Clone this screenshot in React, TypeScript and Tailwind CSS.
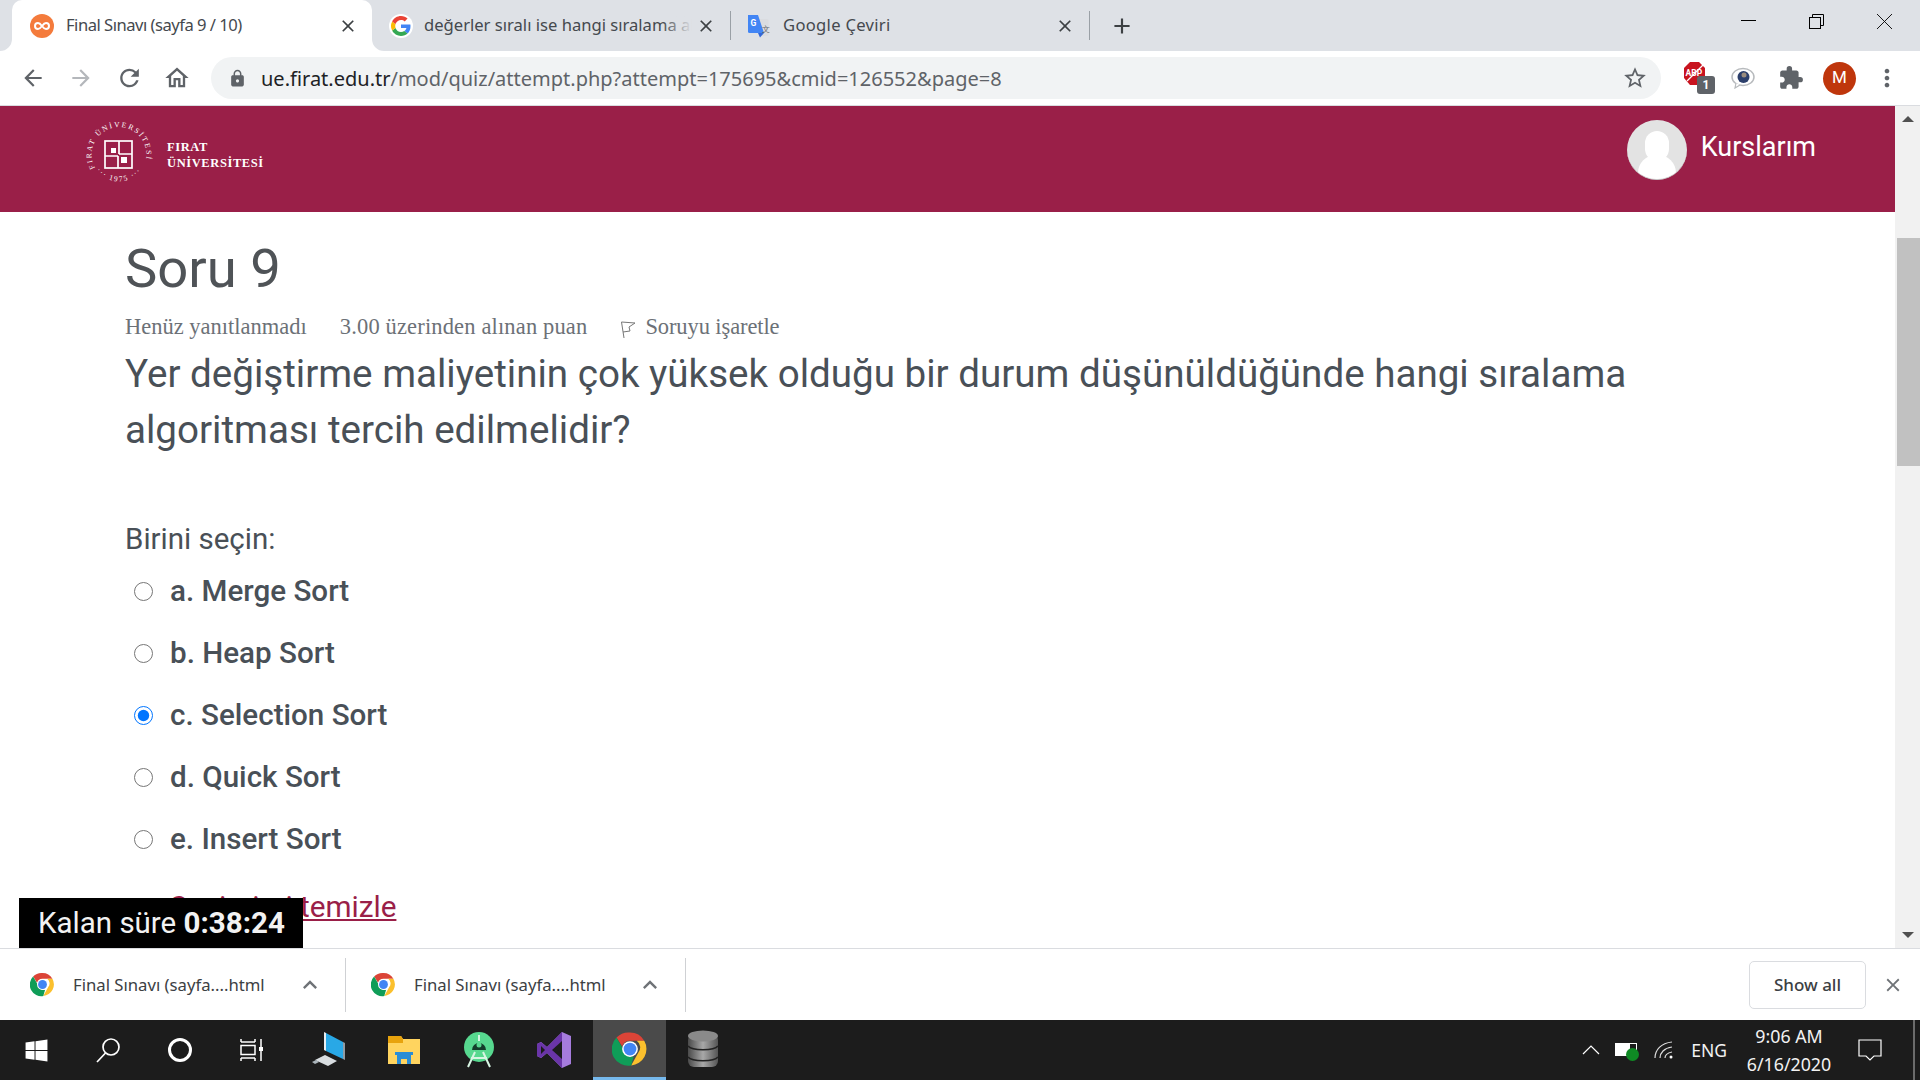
import {
  MdAdd,
  MdArrowBack,
  MdArrowForward,
  MdClose,
  MdExpandLess,
  MdExtension,
  MdLock,
  MdMoreVert,
  MdOutlineHome,
  MdRefresh,
  MdStarBorder,
} from "react-icons/md";
import { FaWindows } from "react-icons/fa";

function ChromeLogo({ size }: { size: number }) {
  return (
    <svg width={size} height={size} viewBox="0 0 48 48">
      <path d="M24 2a22 22 0 0 1 19 11H24a11 11 0 0 0-10.500 7.500L6 8.800A22 22 0 0 1 24 2z" fill="#db4437" />
      <path d="M43 13a22 22 0 0 1-17.500 32.900L35 29a11 11 0 0 0-2-16z" fill="#fbc02d" />
      <path d="M6 8.800l9.500 16.500A11 11 0 0 0 29 34l-3.500 12A22 22 0 0 1 6 8.800z" fill="#0f9d58" />
      <circle cx="24" cy="24" r="10.500" fill="#fff" />
      <circle cx="24" cy="24" r="8.500" fill="#4285f4" />
    </svg>
  );
}

function GoogleG() {
  return (
    <svg width="24" height="24" viewBox="0 0 48 48">
      <circle cx="24" cy="24" r="24" fill="#fff" />
      <path d="M43 24.500c0-1.400-.1-2.400-.3-3.500H24v7h10.800c-.5 2.700-2 4.700-4.300 6.200l6.500 5c3.800-3.500 6-8.700 6-14.700z" fill="#4285f4" />
      <path d="M24 44c5.400 0 9.900-1.800 13-4.800l-6.500-5c-1.700 1.200-3.900 1.900-6.500 1.900-5.100 0-9.400-3.400-11-8.100l-6.700 5.200C9.600 39.600 16.300 44 24 44z" fill="#34a853" />
      <path d="M13 28c-.8-2.500-.8-5.300 0-8l-6.700-5.200a20 20 0 0 0 0 18.400z" fill="#fbbc05" />
      <path d="M24 11.900c2.900 0 5.400 1 7.400 2.900l5.700-5.700C33.800 6 29.400 4 24 4 16.300 4 9.600 8.400 6.300 14.800L13 20c1.600-4.700 5.900-8.100 11-8.100z" fill="#ea4335" />
    </svg>
  );
}

function TranslateIcon() {
  return (
    <svg width="24" height="24" viewBox="0 0 24 24">
      <path d="M11 5h10a1.500 1.500 0 0 1 1.500 1.500v14a1.500 1.500 0 0 1-1.500 1.500h-8z" fill="#dadce0" />
      <path d="M2 1h10l6 18H3.500A1.500 1.500 0 0 1 2 17.500z" fill="#4285f4" />
      <path d="M12 19h6l-4 4.500z" fill="#3367d6" />
      <text x="4.500" y="12" fontSize="8.500" fontWeight="700" fill="#fff" fontFamily="Roboto, sans-serif">G</text>
      <text x="16" y="18" fontSize="8" fill="#5f6368" fontFamily="Roboto, sans-serif">文</text>
    </svg>
  );
}

function FiratLogo() {
  return (
    <svg width="70" height="70" viewBox="0 0 70 70" className="shrink-0">
      <defs>
        <path id="topArc" d="M11 48A27.500 27.500 0 1 1 59 48" />
        <path id="botArc" d="M12 50A29 29 0 0 0 58 50" />
      </defs>
      <text fontSize="7.500" fill="#fff" letterSpacing="1.800" fontFamily="'Liberation Serif', serif">
        <textPath href="#topArc">FIRAT ÜNİVERSİTESİ</textPath>
      </text>
      <text fontSize="7.500" fill="#fff" letterSpacing="1.500" fontFamily="'Liberation Serif', serif">
        <textPath href="#botArc" startOffset="50%" textAnchor="middle">··· 1975 ···</textPath>
      </text>
      <g fill="none" stroke="#fff" strokeWidth="1.700">
        <rect x="21" y="21" width="27" height="27" />
        <path d="M35 21v13M21 36h13M34 36v12M35 34h13" />
      </g>
      <rect x="27" y="28" width="5" height="5" fill="#fff" />
      <rect x="37" y="37" width="6" height="6" fill="#fff" />
    </svg>
  );
}

function Tab({ children, widthClass }: { children: React.ReactNode; widthClass: string }) {
  return <div className={`flex h-full items-center shrink-0 ${widthClass}`}>{children}</div>;
}

const tabText = "font-['Noto_Sans',sans-serif] text-[16.600px] text-[#45494e] whitespace-nowrap";

function TabBar() {
  return (
    <div className="h-[51px] bg-[#dee1e6] flex items-stretch shrink-0 pl-[12px]">
      <div className="relative w-[360px] shrink-0 bg-white rounded-t-[10px] flex items-center pl-[18px] pr-[14px]">
        <svg width="24" height="24" viewBox="0 0 24 24" className="shrink-0">
          <circle cx="12" cy="12" r="12" fill="#f47b3c" />
          <path d="M12 12c-1.500-2-2.500-3-4-3a3 3 0 0 0 0 6c1.500 0 2.500-1 4-3s2.500-3 4-3a3 3 0 0 1 0 6c-1.500 0-2.500-1-4-3z" fill="none" stroke="#fff" strokeWidth="2" />
        </svg>
        <span className={`${tabText} ml-[12px] flex-1 tracking-[-0.500px]`}>Final Sınavı (sayfa 9 / 10)</span>
        <MdClose size={20} className="text-[#3c4043]" />
        <svg width="12" height="12" viewBox="0 0 12 12" className="absolute left-[-12px] bottom-0">
          <path d="M12 0v12H0a12 12 0 0 0 12-12z" fill="#fff" />
        </svg>
        <svg width="12" height="12" viewBox="0 0 12 12" className="absolute right-[-12px] bottom-0">
          <path d="M0 0v12h12A12 12 0 0 1 0 0z" fill="#fff" />
        </svg>
      </div>
      <Tab widthClass="w-[358px] pl-[17px] pr-[14px]">
        <GoogleG />
        <div className="relative ml-[11px] flex-1 overflow-hidden">
          <span className={tabText}>değerler sıralı ise hangi sıralama algoritması</span>
          <div className="absolute right-0 top-0 bottom-0 w-[30px] bg-gradient-to-r from-transparent to-[#dee1e6]" />
        </div>
        <MdClose size={20} className="text-[#3c4043] ml-[4px]" />
      </Tab>
      <div className="w-px bg-[#9aa0a6] my-[11px]" />
      <Tab widthClass="w-[358px] pl-[15px] pr-[14px]">
        <TranslateIcon />
        <span className={`${tabText} ml-[13px] flex-1 tracking-[0.300px]`}>Google Çeviri</span>
        <MdClose size={20} className="text-[#3c4043]" />
      </Tab>
      <div className="w-px bg-[#9aa0a6] my-[11px]" />
      <div className="flex items-center pl-[19px]">
        <MdAdd size={26} className="text-[#3c4043]" />
      </div>
      <div className="ml-auto flex items-start text-[#202124] mr-[2px]">
        <div className="w-[68px] flex justify-center pt-[20px]">
          <div className="w-[15px] h-px bg-black" />
        </div>
        <div className="w-[68px] flex justify-center pt-[14px]">
          <svg width="15" height="15" viewBox="0 0 15 15" fill="none" stroke="#000">
            <rect x="0.500" y="3.500" width="11" height="11" fill="#dee1e6" />
            <path d="M3.500 3.500v-3h11v11h-3" />
          </svg>
        </div>
        <div className="w-[68px] flex justify-center pt-[13px]">
          <svg width="17" height="17" viewBox="0 0 17 17" stroke="#000" strokeWidth="0.900">
            <path d="M1 1l15 15M16 1L1 16" />
          </svg>
        </div>
      </div>
    </div>
  );
}

function Toolbar() {
  return (
    <div className="h-[55px] bg-white border-b border-[#dadce0] flex items-center shrink-0 pl-[20px]">
      <div className="flex items-center w-[191px] text-[#5f6368]">
        <MdArrowBack size={26} className="w-[48px] -ml-[11px]" />
        <MdArrowForward size={26} className="w-[48px] text-[#b4b7bb]" />
        <MdRefresh size={28} className="w-[49px]" />
        <MdOutlineHome size={28} className="w-[48px] -translate-x-[1px]" />
      </div>
      <div className="w-[1450px] h-[42px] rounded-full bg-[#f1f3f4] flex items-center pl-[17px] pr-[13px] shrink-0">
        <MdLock size={19} className="text-[#5f6368]" />
        <span className="ml-[14px] flex-1 font-['Noto_Sans',sans-serif] text-[20px] whitespace-nowrap text-[#5f6368] pt-[1px]">
          <span className="text-[#202124]">ue.firat.edu.tr</span>/mod/quiz/attempt.php?attempt=175695&amp;cmid=126552&amp;page=8
        </span>
        <MdStarBorder size={26} className="text-[#5f6368]" />
      </div>
      <div className="flex items-center ml-[22px]">
        <div className="relative w-[48px] h-[34px] flex items-start">
          <svg width="23" height="25" viewBox="0 0 23 25">
            <path d="M7 1h9l6 6v10l-6 7H7l-6-7V7z" fill="#c8131f" />
            <text x="2.500" y="15" fontSize="8.500" fontWeight="700" fill="#fff" fontFamily="Roboto, sans-serif">ABP</text>
            <path d="M4 20L20 4" stroke="#fff" strokeWidth="1.200" />
          </svg>
          <div className="absolute left-[14px] top-[15px] w-[18px] h-[18px] rounded-[3px] bg-[#5f6368] text-white text-[12px] font-bold flex items-center justify-center font-['Roboto',sans-serif]">
            1
          </div>
        </div>
        <div className="w-[50px]">
          <svg width="24" height="22" viewBox="0 0 24 22">
            <ellipse cx="12" cy="10" rx="11" ry="8.500" fill="#fff" stroke="#b7babd" strokeWidth="1.500" />
            <path d="M5 16l-1 5 5-3" fill="#fff" stroke="#b7babd" strokeWidth="1.200" />
            <circle cx="12.500" cy="10" r="6" fill="#2c3f6b" />
            <circle cx="13" cy="8" r="2.500" fill="#9a8c7d" />
          </svg>
        </div>
        <MdExtension size={26} className="text-[#5f6368] -ml-[3px] mr-[19px]" />
        <div className="w-[33px] h-[33px] rounded-full bg-[#bf360c] text-white text-[17px] flex items-center justify-center font-['Roboto',sans-serif]">
          M
        </div>
        <MdMoreVert size={28} className="text-[#5f6368] ml-[17px]" />
      </div>
    </div>
  );
}

const options = [
  { label: "a. Merge Sort" },
  { label: "b. Heap Sort" },
  { label: "c. Selection Sort", checked: true },
  { label: "d. Quick Sort" },
  { label: "e. Insert Sort" },
];

function Page() {
  return (
    <div className="flex-1 min-h-0 flex relative overflow-hidden">
      <div className="flex-1 min-w-0 overflow-hidden">
        <header className="h-[106px] bg-[#9a1f48] flex items-start justify-between pl-[84px] pr-[79px]">
          <div className="flex items-center mt-[14px]">
            <FiratLogo />
            <div className="ml-[13px] -mt-[1px] font-['Liberation_Serif',serif] font-bold text-white text-[12.500px] leading-[16px] tracking-[0.600px]">
              <div>FIRAT</div>
              <div>ÜNİVERSİTESİ</div>
            </div>
          </div>
          <div className="flex items-center mt-[14px]">
            <div className="w-[60px] h-[60px] rounded-full bg-[#e3e3e3] overflow-hidden relative border-b border-[#c9c9c9]">
              <div className="absolute left-[18px] top-[11px] w-[24px] h-[30px] rounded-full bg-white" />
              <div className="absolute left-[11px] top-[35px] w-[38px] h-[36px] rounded-full bg-white" />
            </div>
            <span className="ml-[14px] -mt-[6px] font-['Roboto',sans-serif] text-[27px] text-white">Kurslarım</span>
          </div>
        </header>
        <main className="pl-[125px] font-['Roboto',sans-serif] text-[#495057]">
          <h2 className="text-[54.400px] leading-[60px] mt-[27px] text-[#4f5357]">Soru 9</h2>
          <div className="flex items-center mt-[13px] font-['Liberation_Serif',serif] text-[22.500px] leading-[30px] text-[#6c7177]">
            <span>Henüz yanıtlanmadı</span>
            <span className="ml-[33px] tracking-[0.150px]">3.00 üzerinden alınan puan</span>
            <svg width="16" height="20" viewBox="0 0 16 20" className="ml-[33px] mt-[3px]" fill="none" stroke="#777">
              <path d="M4 19L1.500 3 15 4l-6 4 1 4-7 1" />
            </svg>
            <span className="ml-[9px] tracking-[-0.100px]">Soruyu işaretle</span>
          </div>
          <div className="text-[38.600px] leading-[56px] w-[1560px] mt-[4px]">
            Yer değiştirme maliyetinin çok yüksek olduğu bir durum düşünüldüğünde hangi sıralama algoritması tercih edilmelidir?
          </div>
          <div className="text-[29.500px] leading-[44px] mt-[59px]">Birini seçin:</div>
          <div className="flex flex-col -mt-[1px]">
            {options.map((o) => (
              <label key={o.label} className="h-[62px] flex items-center pl-[9px]">
                <input type="radio" name="answer" defaultChecked={o.checked} className="w-[19px] h-[19px] m-0" />
                <span className="ml-[17px] text-[29.600px] font-medium">{o.label}</span>
              </label>
            ))}
          </div>
          <a className="block ml-[45px] mt-[17px] text-[29.700px] leading-[40px] text-[#9a1f48] underline">
            Seçimimi temizle
          </a>
        </main>
      </div>
      <div className="w-[25px] shrink-0 bg-[#f1f1f1] flex flex-col items-center pl-[1px]">
        <div className="h-[26px] flex items-center justify-center">
          <div className="w-0 h-0 border-x-[6px] border-x-transparent border-b-[6px] border-b-[#505050]" />
        </div>
        <div className="w-[23px] h-[228px] bg-[#c1c1c1] mt-[106px]" />
        <div className="flex-1" />
        <div className="h-[26px] flex items-center justify-center">
          <div className="w-0 h-0 border-x-[6px] border-x-transparent border-t-[6px] border-t-[#505050]" />
        </div>
      </div>
      <div className="absolute left-[19px] bottom-0 w-[284px] h-[50px] bg-black text-[#f2f2f2] flex items-center pl-[19px] font-['Roboto',sans-serif] text-[29.500px] whitespace-nowrap">
        Kalan süre&nbsp;<span className="font-bold">0:38:24</span>
      </div>
    </div>
  );
}

function DownloadItem({ widthClass }: { widthClass: string }) {
  return (
    <div className={`flex items-center h-[54px] border-r border-[#cfd1d4] shrink-0 ${widthClass}`}>
      <ChromeLogo size={25} />
      <span className="ml-[18px] flex-1 font-['Noto_Sans',sans-serif] text-[16.700px] text-[#3c4043] whitespace-nowrap">
        Final Sınavı (sayfa....html
      </span>
      <MdExpandLess size={28} className="text-[#6f7377] mr-[21px]" />
    </div>
  );
}

function DownloadBar() {
  return (
    <div className="h-[72px] bg-white border-t border-[#dadce0] flex items-center shrink-0 pl-[30px]">
      <DownloadItem widthClass="w-[316px]" />
      <DownloadItem widthClass="w-[340px] pl-[25px]" />
      <div className="ml-auto flex items-center">
        <div className="w-[117px] h-[48px] rounded-[5px] border border-[#dadce0] flex items-center justify-center font-['Noto_Sans',sans-serif] text-[17px] font-medium text-[#3c4043]">
          Show all
        </div>
        <MdClose size={22} className="text-[#6f7377] ml-[16px] mr-[16px]" />
      </div>
    </div>
  );
}

function Taskbar() {
  return (
    <div className="h-[60px] bg-[#1c1c1c] flex items-stretch shrink-0 text-white">
      <div className="w-[72px] flex items-center justify-center">
        <FaWindows size={25} />
      </div>
      <div className="w-[72px] flex items-center justify-center">
        <svg width="26" height="26" viewBox="0 0 26 26" fill="none" stroke="#fff" strokeWidth="1.700">
          <circle cx="16" cy="10" r="8" />
          <path d="M10.500 16L2 25" />
        </svg>
      </div>
      <div className="w-[72px] flex items-center justify-center">
        <div className="w-[24px] h-[24px] rounded-full border-[3.500px] border-white" />
      </div>
      <div className="w-[72px] flex items-center justify-center">
        <svg width="26" height="24" viewBox="0 0 26 24" fill="none" stroke="#fff" strokeWidth="1.500">
          <path d="M2 4h14M2 1v3M16 1v3M2 7.500h14v9H2zM2 20h14M2 20v3M16 20v3M22 1v22" />
          <path d="M20 9h4v4h-4z" fill="#fff" stroke="none" />
        </svg>
      </div>
      <div className="w-[82px] flex items-center justify-center">
        <svg width="36" height="36" viewBox="0 0 36 36">
          <path d="M15 1l17 9v17L15 19z" fill="#29a8e6" />
          <path d="M13 0l2 1v18l-2-1z" fill="#e8eef2" />
          <path d="M32 10l2 1v17l-2-1z" fill="#8f9ba3" />
          <path d="M4 28l10-5 12 6-9 5z" fill="#d8dde0" />
          <path d="M1 30l4-2 3 2-4 2z" fill="#aab4ba" />
        </svg>
      </div>
      <div className="w-[68px] flex items-center justify-center">
        <svg width="34" height="30" viewBox="0 0 34 30">
          <path d="M1 1h13l2 3h17v25H1z" fill="#ffd45f" />
          <path d="M1 1h13l2 3v4H1z" fill="#e8a30d" />
          <path d="M10 19h14v10h-4v-5h-6v5h-4z" fill="#2a8dd6" />
          <path d="M8 17h18v3H8z" fill="#2a8dd6" />
        </svg>
      </div>
      <div className="w-[82px] flex items-center justify-center">
        <svg width="32" height="36" viewBox="0 0 32 36">
          <ellipse cx="16" cy="15" rx="15" ry="15" fill="#57d88f" />
          <path d="M16 3v6M12 20L5 35M20 20l7 15M8 26h16" stroke="#d7f5e3" strokeWidth="2" fill="none" />
          <path d="M9 18a7 7 0 0 1 14 0z" fill="#143d2b" />
          <circle cx="16" cy="13" r="2.500" fill="#57d88f" />
        </svg>
      </div>
      <div className="w-[68px] flex items-center justify-center">
        <svg width="36" height="38" viewBox="0 0 36 38">
          <path d="M26 1l9 4v28l-9 4L11 22l-6 5-4-2V13l4-2 6 5z" fill="#a67cdd" />
          <path d="M26 1L11 16 5 11l-4 2v12l4 2 6-5 15 15z" fill="#6a35a8" />
          <path d="M26 10v18l-10-9z" fill="#1c1c1c" />
          <path d="M5 15v8l4-4z" fill="#1c1c1c" />
        </svg>
      </div>
      <div className="ml-[5px] w-[73px] bg-[#4a4a4a] border-b-[3px] border-[#76b9ed] flex items-center justify-center">
        <ChromeLogo size={36} />
      </div>
      <div className="w-[73px] flex items-center justify-center">
        <svg width="32" height="40" viewBox="0 0 32 40">
          <defs>
            <linearGradient id="dbGrad" x1="0" x2="1" y1="0" y2="0">
              <stop offset="0" stopColor="#4a4a4a" />
              <stop offset="0.500" stopColor="#a8a8a8" />
              <stop offset="1" stopColor="#555" />
            </linearGradient>
          </defs>
          <rect x="1" y="4" width="30" height="33" rx="6" fill="url(#dbGrad)" />
          <ellipse cx="16" cy="6" rx="15" ry="5.500" fill="#8a8a8a" />
          <path d="M1 16c4 5 26 5 30 0M1 27c4 5 26 5 30 0" fill="none" stroke="#222" strokeWidth="1.500" />
        </svg>
      </div>
      <div className="ml-auto flex items-center font-['Noto_Sans',sans-serif] text-[#f2f2f2]">
        <svg width="18" height="10" viewBox="0 0 18 10" fill="none" stroke="#fff" strokeWidth="1.200">
          <path d="M1 9l8-8 8 8" />
        </svg>
        <div className="relative w-[22px] h-[13px] ml-[15px] -mt-[2px] border-[1.500px] border-white">
          <div className="h-full w-[14px] bg-white" />
          <div className="absolute left-[10px] top-[4px] w-[13px] h-[13px] rounded-full bg-[#0f8a24]" />
        </div>
        <svg width="20" height="18" viewBox="0 0 20 18" fill="none" stroke="#ddd" strokeWidth="1.200" className="ml-[17px]">
          <path d="M1 17C1 9 7 2 18 1M6 17c0-5 4-10 12-11M11 17c0-3 2-5 7-6" />
          <circle cx="17" cy="16" r="1.500" fill="#fff" stroke="none" />
        </svg>
        <span className="ml-[17px] text-[17.500px]">ENG</span>
        <div className="w-[128px] -ml-[2px] text-center text-[17.800px] leading-[28px]">
          <div>9:06 AM</div>
          <div>6/16/2020</div>
        </div>
        <svg width="24" height="24" viewBox="0 0 24 24" fill="none" stroke="#fff" strokeWidth="1.200" className="ml-[5px]">
          <path d="M1 2h22v16h-7l-4 4-4-4H1z" />
        </svg>
        <div className="ml-[31px] w-[2px] h-[60px] bg-[#6b6b6b]" />
        <div className="w-[5px]" />
      </div>
    </div>
  );
}

export default function App() {
  return (
    <div className="w-[1920px] h-[1080px] flex flex-col overflow-hidden bg-white">
      <TabBar />
      <Toolbar />
      <Page />
      <DownloadBar />
      <Taskbar />
    </div>
  );
}
